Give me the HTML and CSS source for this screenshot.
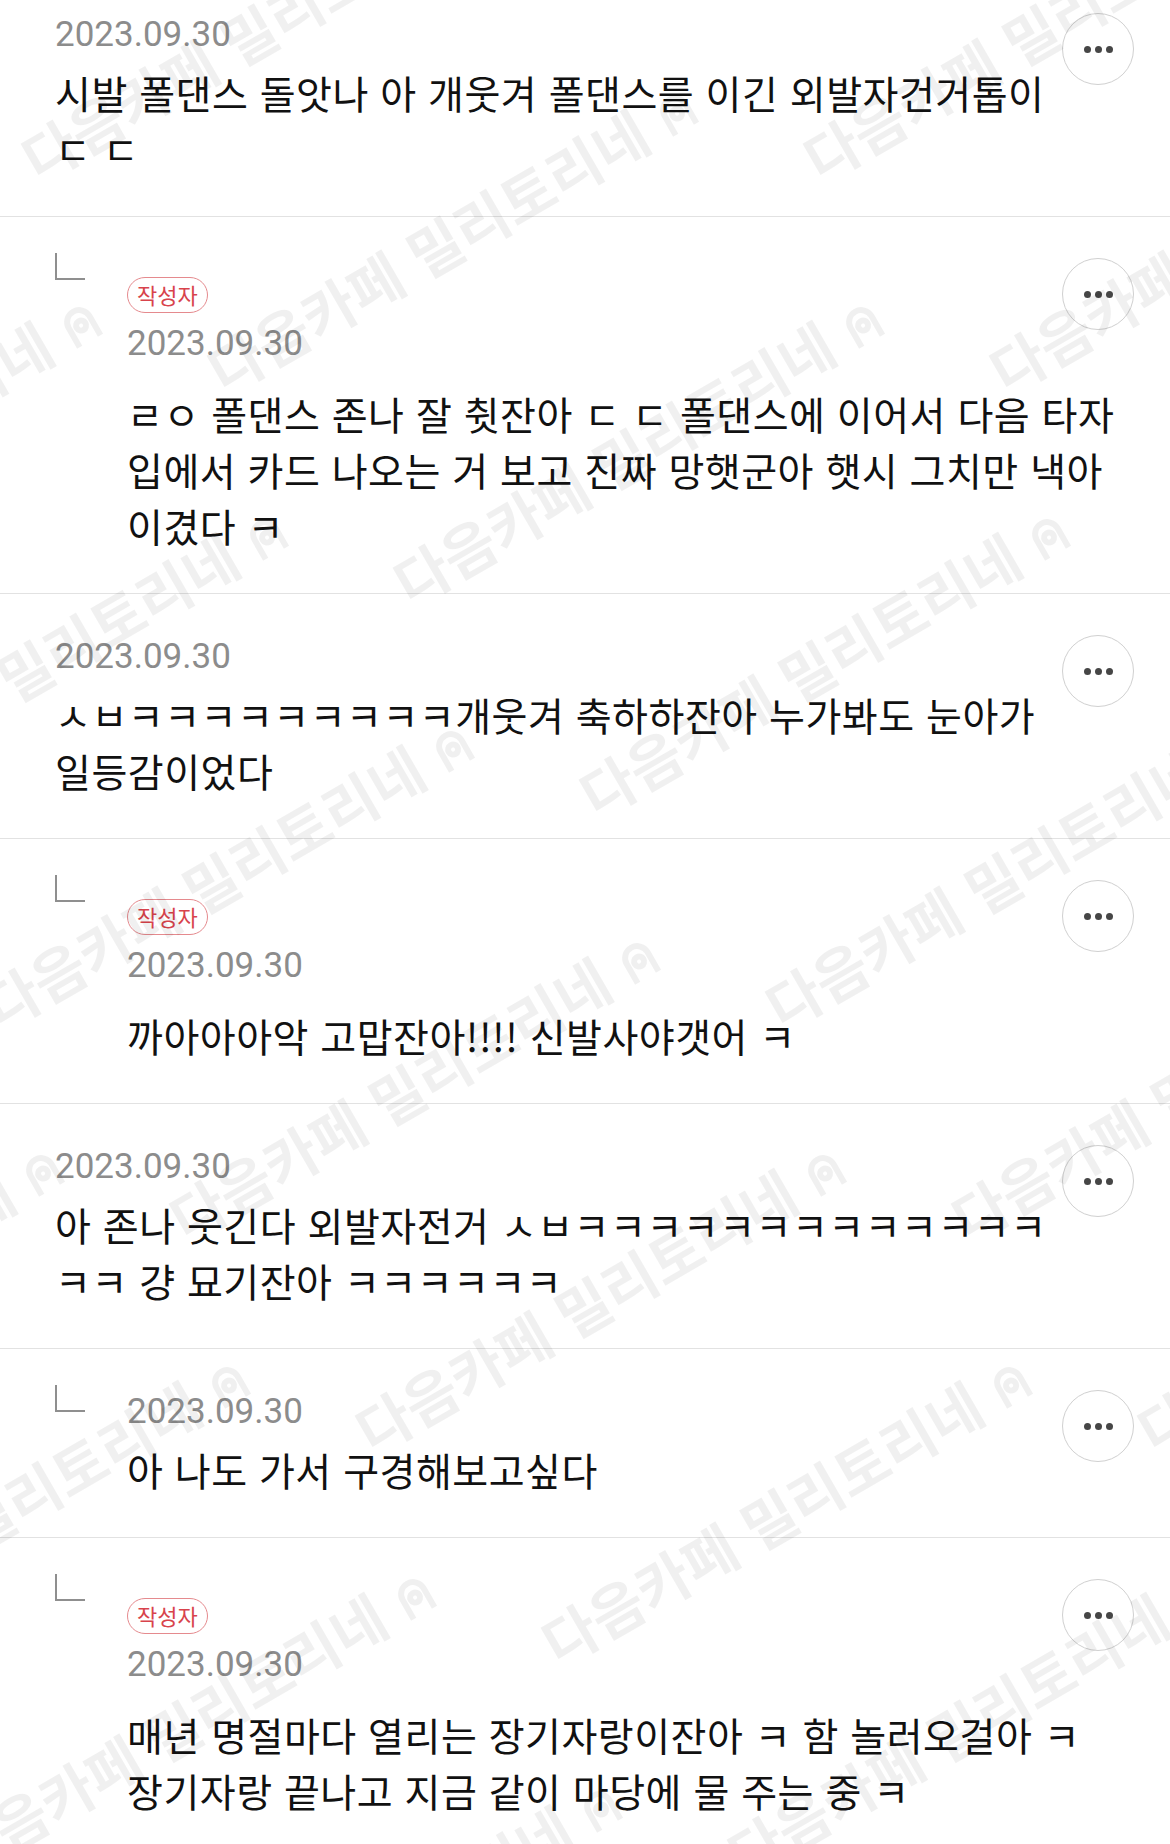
FILE: index.html
```html
<!DOCTYPE html>
<html lang="ko">
<head>
<meta charset="utf-8">
<title>댓글</title>
<link rel="stylesheet" href="styles.css">
</head>
<body>
<div class="page">
  <section class="thread">
    <article class="comment first">
      <button class="more" aria-label="더보기"><span></span><span></span><span></span></button>
      <div class="date">2023.09.30</div>
      <p class="text">시발 폴댄스 돌앗나 아 개웃겨 폴댄스를 이긴 외발자건거톱이<br>ㄷ ㄷ</p>
    </article>

    <article class="comment reply">
      <span class="mark"></span>
      <div class="body">
        <button class="more" aria-label="더보기"><span></span><span></span><span></span></button>
        <div class="badge">작성자</div>
        <div class="date">2023.09.30</div>
        <p class="text after-badge">ㄹㅇ 폴댄스 존나 잘 췻잔아 ㄷ ㄷ 폴댄스에 이어서 다음 타자<br>입에서 카드 나오는 거 보고 진짜 망햇군아 햇시 그치만 낵아<br>이겼다 ㅋ</p>
      </div>
    </article>

    <article class="comment">
      <button class="more" aria-label="더보기"><span></span><span></span><span></span></button>
      <div class="date">2023.09.30</div>
      <p class="text">ㅅㅂㅋㅋㅋㅋㅋㅋㅋㅋㅋ개웃겨 축하하잔아 누가봐도 눈아가<br>일등감이었다</p>
    </article>

    <article class="comment reply">
      <span class="mark"></span>
      <div class="body">
        <button class="more" aria-label="더보기"><span></span><span></span><span></span></button>
        <div class="badge">작성자</div>
        <div class="date">2023.09.30</div>
        <p class="text after-badge">까아아아악 고맙잔아!!!! 신발사야갯어 ㅋ</p>
      </div>
    </article>

    <article class="comment">
      <button class="more" aria-label="더보기"><span></span><span></span><span></span></button>
      <div class="date">2023.09.30</div>
      <p class="text">아 존나 웃긴다 외발자전거 ㅅㅂㅋㅋㅋㅋㅋㅋㅋㅋㅋㅋㅋㅋㅋ<br>ㅋㅋ 걍 묘기잔아 ㅋㅋㅋㅋㅋㅋ</p>
    </article>

    <article class="comment reply">
      <span class="mark"></span>
      <div class="body">
        <button class="more" aria-label="더보기"><span></span><span></span><span></span></button>
        <div class="date">2023.09.30</div>
        <p class="text">아 나도 가서 구경해보고싶다</p>
      </div>
    </article>

    <article class="comment reply">
      <span class="mark"></span>
      <div class="body">
        <button class="more" aria-label="더보기"><span></span><span></span><span></span></button>
        <div class="badge">작성자</div>
        <div class="date">2023.09.30</div>
        <p class="text after-badge">매년 명절마다 열리는 장기자랑이잔아 ㅋ 함 놀러오걸아 ㅋ<br>장기자랑 끝나고 지금 같이 마당에 물 주는 중 ㅋ</p>
      </div>
    </article>
  </section>

  <div class="wm" aria-hidden="true">
    <div class="wm-row"><span class="wm-item"><span class="wm-text">다음카페 밀리토리네 <svg class="wm-logo" viewBox="0 0 40 44"><path d="M8 42V20a12 12 0 0 1 24 0v22"/><circle cx="20" cy="24" r="5"/></svg></span></span><span class="wm-item"><span class="wm-text">다음카페 밀리토리네 <svg class="wm-logo" viewBox="0 0 40 44"><path d="M8 42V20a12 12 0 0 1 24 0v22"/><circle cx="20" cy="24" r="5"/></svg></span></span><span class="wm-item"><span class="wm-text">다음카페 밀리토리네 <svg class="wm-logo" viewBox="0 0 40 44"><path d="M8 42V20a12 12 0 0 1 24 0v22"/><circle cx="20" cy="24" r="5"/></svg></span></span></div>
    <div class="wm-row"><span class="wm-item"><span class="wm-text">다음카페 밀리토리네 <svg class="wm-logo" viewBox="0 0 40 44"><path d="M8 42V20a12 12 0 0 1 24 0v22"/><circle cx="20" cy="24" r="5"/></svg></span></span><span class="wm-item"><span class="wm-text">다음카페 밀리토리네 <svg class="wm-logo" viewBox="0 0 40 44"><path d="M8 42V20a12 12 0 0 1 24 0v22"/><circle cx="20" cy="24" r="5"/></svg></span></span><span class="wm-item"><span class="wm-text">다음카페 밀리토리네 <svg class="wm-logo" viewBox="0 0 40 44"><path d="M8 42V20a12 12 0 0 1 24 0v22"/><circle cx="20" cy="24" r="5"/></svg></span></span></div>
    <div class="wm-row"><span class="wm-item"><span class="wm-text">다음카페 밀리토리네 <svg class="wm-logo" viewBox="0 0 40 44"><path d="M8 42V20a12 12 0 0 1 24 0v22"/><circle cx="20" cy="24" r="5"/></svg></span></span><span class="wm-item"><span class="wm-text">다음카페 밀리토리네 <svg class="wm-logo" viewBox="0 0 40 44"><path d="M8 42V20a12 12 0 0 1 24 0v22"/><circle cx="20" cy="24" r="5"/></svg></span></span><span class="wm-item"><span class="wm-text">다음카페 밀리토리네 <svg class="wm-logo" viewBox="0 0 40 44"><path d="M8 42V20a12 12 0 0 1 24 0v22"/><circle cx="20" cy="24" r="5"/></svg></span></span></div>
    <div class="wm-row"><span class="wm-item"><span class="wm-text">다음카페 밀리토리네 <svg class="wm-logo" viewBox="0 0 40 44"><path d="M8 42V20a12 12 0 0 1 24 0v22"/><circle cx="20" cy="24" r="5"/></svg></span></span><span class="wm-item"><span class="wm-text">다음카페 밀리토리네 <svg class="wm-logo" viewBox="0 0 40 44"><path d="M8 42V20a12 12 0 0 1 24 0v22"/><circle cx="20" cy="24" r="5"/></svg></span></span><span class="wm-item"><span class="wm-text">다음카페 밀리토리네 <svg class="wm-logo" viewBox="0 0 40 44"><path d="M8 42V20a12 12 0 0 1 24 0v22"/><circle cx="20" cy="24" r="5"/></svg></span></span></div>
    <div class="wm-row"><span class="wm-item"><span class="wm-text">다음카페 밀리토리네 <svg class="wm-logo" viewBox="0 0 40 44"><path d="M8 42V20a12 12 0 0 1 24 0v22"/><circle cx="20" cy="24" r="5"/></svg></span></span><span class="wm-item"><span class="wm-text">다음카페 밀리토리네 <svg class="wm-logo" viewBox="0 0 40 44"><path d="M8 42V20a12 12 0 0 1 24 0v22"/><circle cx="20" cy="24" r="5"/></svg></span></span><span class="wm-item"><span class="wm-text">다음카페 밀리토리네 <svg class="wm-logo" viewBox="0 0 40 44"><path d="M8 42V20a12 12 0 0 1 24 0v22"/><circle cx="20" cy="24" r="5"/></svg></span></span></div>
    <div class="wm-row"><span class="wm-item"><span class="wm-text">다음카페 밀리토리네 <svg class="wm-logo" viewBox="0 0 40 44"><path d="M8 42V20a12 12 0 0 1 24 0v22"/><circle cx="20" cy="24" r="5"/></svg></span></span><span class="wm-item"><span class="wm-text">다음카페 밀리토리네 <svg class="wm-logo" viewBox="0 0 40 44"><path d="M8 42V20a12 12 0 0 1 24 0v22"/><circle cx="20" cy="24" r="5"/></svg></span></span><span class="wm-item"><span class="wm-text">다음카페 밀리토리네 <svg class="wm-logo" viewBox="0 0 40 44"><path d="M8 42V20a12 12 0 0 1 24 0v22"/><circle cx="20" cy="24" r="5"/></svg></span></span></div>
    <div class="wm-row"><span class="wm-item"><span class="wm-text">다음카페 밀리토리네 <svg class="wm-logo" viewBox="0 0 40 44"><path d="M8 42V20a12 12 0 0 1 24 0v22"/><circle cx="20" cy="24" r="5"/></svg></span></span><span class="wm-item"><span class="wm-text">다음카페 밀리토리네 <svg class="wm-logo" viewBox="0 0 40 44"><path d="M8 42V20a12 12 0 0 1 24 0v22"/><circle cx="20" cy="24" r="5"/></svg></span></span><span class="wm-item"><span class="wm-text">다음카페 밀리토리네 <svg class="wm-logo" viewBox="0 0 40 44"><path d="M8 42V20a12 12 0 0 1 24 0v22"/><circle cx="20" cy="24" r="5"/></svg></span></span></div>
    <div class="wm-row"><span class="wm-item"><span class="wm-text">다음카페 밀리토리네 <svg class="wm-logo" viewBox="0 0 40 44"><path d="M8 42V20a12 12 0 0 1 24 0v22"/><circle cx="20" cy="24" r="5"/></svg></span></span><span class="wm-item"><span class="wm-text">다음카페 밀리토리네 <svg class="wm-logo" viewBox="0 0 40 44"><path d="M8 42V20a12 12 0 0 1 24 0v22"/><circle cx="20" cy="24" r="5"/></svg></span></span><span class="wm-item"><span class="wm-text">다음카페 밀리토리네 <svg class="wm-logo" viewBox="0 0 40 44"><path d="M8 42V20a12 12 0 0 1 24 0v22"/><circle cx="20" cy="24" r="5"/></svg></span></span></div>
    <div class="wm-row"><span class="wm-item"><span class="wm-text">다음카페 밀리토리네 <svg class="wm-logo" viewBox="0 0 40 44"><path d="M8 42V20a12 12 0 0 1 24 0v22"/><circle cx="20" cy="24" r="5"/></svg></span></span><span class="wm-item"><span class="wm-text">다음카페 밀리토리네 <svg class="wm-logo" viewBox="0 0 40 44"><path d="M8 42V20a12 12 0 0 1 24 0v22"/><circle cx="20" cy="24" r="5"/></svg></span></span><span class="wm-item"><span class="wm-text">다음카페 밀리토리네 <svg class="wm-logo" viewBox="0 0 40 44"><path d="M8 42V20a12 12 0 0 1 24 0v22"/><circle cx="20" cy="24" r="5"/></svg></span></span></div>
    <div class="wm-row"><span class="wm-item"><span class="wm-text">다음카페 밀리토리네 <svg class="wm-logo" viewBox="0 0 40 44"><path d="M8 42V20a12 12 0 0 1 24 0v22"/><circle cx="20" cy="24" r="5"/></svg></span></span><span class="wm-item"><span class="wm-text">다음카페 밀리토리네 <svg class="wm-logo" viewBox="0 0 40 44"><path d="M8 42V20a12 12 0 0 1 24 0v22"/><circle cx="20" cy="24" r="5"/></svg></span></span><span class="wm-item"><span class="wm-text">다음카페 밀리토리네 <svg class="wm-logo" viewBox="0 0 40 44"><path d="M8 42V20a12 12 0 0 1 24 0v22"/><circle cx="20" cy="24" r="5"/></svg></span></span></div>
  </div>
</div>
</body>
</html>
```

FILE: styles.css
```css
* { box-sizing: border-box; }

html, body {
  margin: 0;
  padding: 0;
  background: #ffffff;
}

body {
  font-family: "Noto Sans CJK KR", "Noto Sans", sans-serif;
  color: #111111;
}

.page {
  position: relative;
  width: 1170px;
  height: 1844px;
  overflow: hidden;
}

.thread {
  display: flex;
  flex-direction: column;
}

.comment {
  display: flow-root;
  padding: 43px 36px 40px 55px;
  border-bottom: 1px solid #e2e2e2;
}

.comment.first {
  padding-top: 15px;
}

.comment.reply {
  display: flex;
  align-items: flex-start;
}

.mark {
  flex: none;
  width: 30px;
  height: 27px;
  margin-top: -7px;
  margin-right: 42px;
  border-left: 2px solid #8f8f8f;
  border-bottom: 2px solid #8f8f8f;
}

.body {
  flex: 1;
  display: flow-root;
  min-width: 0;
}

.more {
  float: right;
  width: 72px;
  height: 72px;
  margin: -2px 0 0 0;
  padding: 0;
  border: 1.5px solid #d0d0d0;
  border-radius: 50%;
  background: transparent;
  display: flex;
  align-items: center;
  justify-content: center;
  gap: 4px;
}

.more span {
  width: 7px;
  height: 7px;
  border-radius: 50%;
  background: #464646;
}

.badge {
  width: max-content;
  height: 36px;
  margin: 17px 0 11px;
  padding: 0 9px;
  border: 1.5px solid #e58a8e;
  border-radius: 18px;
  color: #d8434c;
  font-size: 22px;
  line-height: 33px;
}

.date {
  font-family: Roboto, "Liberation Sans", sans-serif;
  font-size: 35px;
  line-height: 40px;
  color: #8c8c8c;
}

.text {
  margin: 9px 0 0;
  font-size: 39px;
  line-height: 56px;
  letter-spacing: 0.5px;
  color: #111111;
  word-break: keep-all;
}

.text.after-badge {
  margin-top: 21px;
}

/* watermark overlay */
.wm {
  position: absolute;
  inset: 0;
  padding-top: 128px;
  pointer-events: none;
  overflow: hidden;
  color: rgba(0, 0, 0, 0.06);
}

.wm-row {
  display: flex;
  height: 212px;
}

.wm-row:nth-child(1)  { margin-left: -741px; }
.wm-row:nth-child(2)  { margin-left: -555px; }
.wm-row:nth-child(3)  { margin-left: -369px; }
.wm-row:nth-child(4)  { margin-left: -183px; }
.wm-row:nth-child(5)  { margin-left: -779px; }
.wm-row:nth-child(6)  { margin-left: -593px; }
.wm-row:nth-child(7)  { margin-left: -407px; }
.wm-row:nth-child(8)  { margin-left: -221px; }
.wm-row:nth-child(9)  { margin-left: -35px; }
.wm-row:nth-child(10) { margin-left: -631px; }

.wm-item {
  flex: none;
  width: 782px;
  height: 212px;
}

.wm-text {
  display: block;
  width: max-content;
  height: 60px;
  font-size: 58px;
  line-height: 60px;
  font-weight: 700;
  white-space: nowrap;
  transform-origin: 0 100%;
  transform: rotate(-30deg);
}

.wm-logo {
  width: 40px;
  height: 44px;
  vertical-align: -2px;
  fill: none;
  stroke: currentColor;
  stroke-width: 6;
}
```
